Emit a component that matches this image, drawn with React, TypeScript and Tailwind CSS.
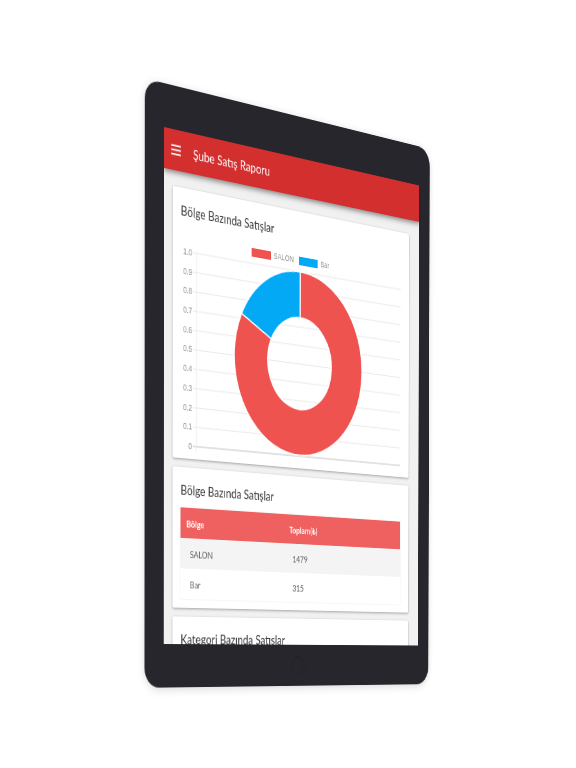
import { useId } from "react";

type Region = { name: string; total: number; color: string };

const regions: Region[] = [
  { name: "SALON", total: 1479, color: "#ef5350" },
  { name: "Bar", total: 315, color: "#03a9f4" },
];

const ticks = ["1.0", "0.9", "0.8", "0.7", "0.6", "0.5", "0.4", "0.3", "0.2", "0.1", "0"];

function slicePath(from: number, to: number) {
  const cx = 174;
  const cy = 105;
  const outer = 98;
  const inner = 49;
  const point = (r: number, t: number) => {
    const angle = t * Math.PI * 2;
    return `${(cx + r * Math.sin(angle)).toFixed(2)} ${(cy - r * Math.cos(angle)).toFixed(2)}`;
  };
  const large = to - from > 0.5 ? 1 : 0;
  return `M${point(outer, from)} A${outer} ${outer} 0 ${large} 1 ${point(outer, to)} L${point(inner, to)} A${inner} ${inner} 0 ${large} 0 ${point(inner, from)} Z`;
}

function RegionChart() {
  const total = regions.reduce((sum, r) => sum + r.total, 0);
  let start = 0;
  const slices = regions.map((r) => {
    const from = start;
    start += r.total / total;
    return { ...r, d: slicePath(from, start) };
  });

  return (
    <div className="font-['Liberation_Sans',Arial,sans-serif] text-[9px]">
      <ul className="mt-3.5 flex h-2.5 items-center justify-center gap-2 pr-4">
        {regions.map((r) => (
          <li key={r.name} className="flex items-center gap-1 leading-[10px] text-[#8a8a8a]">
            <svg viewBox="0 0 29 9" className="h-[9px] w-[29px]" aria-hidden="true">
              <rect width="29" height="9" fill={r.color} />
            </svg>
            {r.name}
          </li>
        ))}
      </ul>
      <svg viewBox="0 0 336 212" className="block w-full" role="img" aria-label="Bölge Bazında Satışlar">
        {ticks.map((label, i) => {
          const y = 7 + i * 19.7;
          const last = i === ticks.length - 1;
          return (
            <g key={label}>
              <line x1="17" x2="336" y1={y} y2={y} stroke={last ? "#c4c4c4" : "#e9e9e9"} />
              <text x="16" y={y + 3} textAnchor="end" fill="#8a8a8a">
                {label}
              </text>
            </g>
          );
        })}
        <line x1="22" x2="22" y1="7" y2="209" stroke="#e9e9e9" />
        {slices.map((s) => (
          <path key={s.name} d={s.d} fill={s.color} stroke="#ffffff" strokeWidth="1.4" />
        ))}
      </svg>
    </div>
  );
}

function RegionTable({ labelledBy }: { labelledBy: string }) {
  return (
    <table
      aria-labelledby={labelledBy}
      className="mt-2 w-full table-fixed border-collapse text-left text-[10px] leading-3 text-[#616161] shadow-[0_0_2px_#0000001a]"
    >
      <thead>
        <tr className="h-[31px] bg-[#ef6160] text-white">
          <th className="w-[150px] pl-2 font-bold">Bölge</th>
          <th className="pl-2 font-bold">Toplam(₺)</th>
        </tr>
      </thead>
      <tbody>
        {regions.map((r) => (
          <tr key={r.name} className="h-[31px] odd:bg-[#f4f4f4]">
            <td className="pl-[13px]">{r.name}</td>
            <td className="pl-[13px]">{r.total}</td>
          </tr>
        ))}
      </tbody>
    </table>
  );
}

const cardClass =
  "rounded-[2px] bg-white pt-[13px] pr-3.5 pl-[11px] shadow-[0_1px_3px_#00000059]";
const headingClass = "text-[14px] leading-5 text-[#383838]";

export default function App() {
  const chartId = useId();
  const tableId = useId();
  const categoryId = useId();

  return (
    <div className="min-h-screen overflow-hidden bg-white pt-[83px] pb-[77px] font-[Lato,'Noto_Sans',sans-serif]">
      <div className="mx-auto w-[284px]">
        {/* Tablet turned away on its vertical axis; the projection is anchored at the screen's corner. */}
        <div className="-ml-2 flex h-[608px] w-[434px] origin-[26px_44px] [transform:matrix3d(0.7354,0.1686,0,0.0003177,-0.0006,0.9983,0,0.0000079,0,0,1,0,0,0,0,1)] flex-col rounded-[20px] bg-[#27262c] pt-11 pr-[18px] pl-[26px] shadow-[0_2px_10px_#00000026]">
          <div className="flex min-h-0 flex-1 flex-col overflow-hidden bg-[#f1f1f1]">
            <header className="relative flex h-[41px] shrink-0 items-center gap-[17px] bg-[#d32f2f] pl-2.5 text-white shadow-[0_2px_6px_#00000080]">
              <button type="button" aria-label="Menü">
                <svg viewBox="0 0 13 12" className="h-3 w-[13px]" fill="currentColor" aria-hidden="true">
                  <rect y="0.4" width="13" height="1.6" />
                  <rect y="4.7" width="13" height="1.6" />
                  <rect y="9" width="13" height="1.6" />
                </svg>
              </button>
              <h1 className="text-[14px] leading-5">Şube Satış Raporu</h1>
            </header>
            <main className="flex flex-col gap-[9px] pt-4 pr-[17px] pl-3">
              <section className={`${cardClass} pb-[5px]`} aria-labelledby={chartId}>
                <h2 id={chartId} className={headingClass}>Bölge Bazında Satışlar</h2>
                <RegionChart />
              </section>
              <section className={`${cardClass} pb-[9px]`} aria-labelledby={tableId}>
                <h2 id={tableId} className={headingClass}>Bölge Bazında Satışlar</h2>
                <RegionTable labelledBy={tableId} />
              </section>
              <section className={`${cardClass} pb-10`} aria-labelledby={categoryId}>
                <h2 id={categoryId} className={headingClass}>Kategori Bazında Satışlar</h2>
              </section>
            </main>
          </div>
          <div className="flex h-11 shrink-0 items-center justify-center">
            <button type="button" aria-label="Ana ekran" className="size-5 rounded-full border border-[#222127]" />
          </div>
        </div>
      </div>
    </div>
  );
}
